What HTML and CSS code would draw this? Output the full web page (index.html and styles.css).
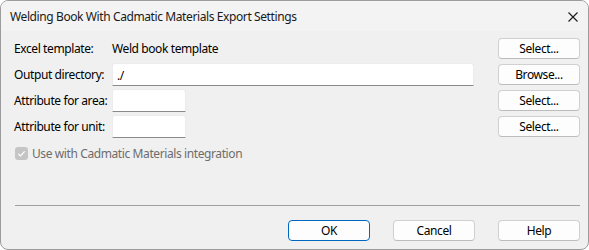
FILE: index.html
```html
<!DOCTYPE html>
<html>
<head>
<meta charset="utf-8">
<link rel="stylesheet" href="styles.css">
</head>
<body>
<div class="window">
  <div class="titlebar">
    <span class="title">Welding Book With Cadmatic Materials Export Settings</span>
    <svg class="close" width="10" height="10" viewBox="0 0 10 10"><path d="M0.5 0.5L9.5 9.5M9.5 0.5L0.5 9.5" stroke="#1a1a1a" stroke-width="1.1" fill="none"/></svg>
  </div>
  <div class="content">
    <div class="form">
      <span class="label">Excel template:</span>
      <span class="value">Weld book template</span>
      <button class="btn">Select...</button>

      <span class="label">Output directory:</span>
      <div class="input wide">./</div>
      <button class="btn">Browse...</button>

      <span class="label">Attribute for area:</span>
      <div class="input short"></div>
      <button class="btn">Select...</button>

      <span class="label">Attribute for unit:</span>
      <div class="input short"></div>
      <button class="btn">Select...</button>
    </div>
    <div class="check-row">
      <span class="checkbox"><svg width="13" height="13" viewBox="0 0 13 13"><path d="M3.3 6.8L5.4 8.9L9.7 4.4" stroke="#ffffff" stroke-width="1.2" fill="none"/></svg></span>
      <span class="check-label">Use with Cadmatic Materials integration</span>
    </div>
    <div class="separator"></div>
    <div class="footer">
      <button class="btn primary">OK</button>
      <button class="btn">Cancel</button>
      <button class="btn">Help</button>
    </div>
  </div>
</div>
</body>
</html>
```
FILE: styles.css
```css
* { box-sizing: border-box; }
html, body { margin: 0; padding: 0; background: #ffffff; }
body {
  font-family: "Noto Sans", "Open Sans", sans-serif;
  font-size: 12px;
  letter-spacing: -0.4px;
  color: #000;
}
.window {
  width: 589px;
  height: 250px;
  border: 1px solid #9c9c9c;
  border-radius: 8px;
  overflow: hidden;
  display: flex;
  flex-direction: column;
  background: #f0f0f0;
}
.titlebar {
  height: 30px;
  background: #f3f3f3;
  display: flex;
  align-items: center;
  justify-content: space-between;
  padding: 0 10px 0 9px;
  flex: none;
}
.title { color: #1a1a1a; }
.close { display: block; margin-top: 1px; }
.content {
  flex: 1;
  display: flex;
  flex-direction: column;
  padding: 7px 8px 8px 13px;
}
.form {
  display: grid;
  grid-template-columns: 99px 1fr 82px;
  grid-template-rows: repeat(4, 21px);
  column-gap: 24px;
  row-gap: 5px;
  align-items: center;
}
.form .label { grid-column: 1; white-space: nowrap; }
.form .value { grid-column: 2; margin-left: -25px; }
.input {
  height: 23px;
  margin: -1px 0 -1px -25px;
  background: #ffffff;
  border: 1px solid #ececec;
  border-bottom: 1px solid #8a8a8a;
  border-radius: 3px 3px 0 0;
  padding: 3px 0 0 4px;
}
.input.short { width: 74px; }
.btn {
  font: inherit;
  letter-spacing: inherit;
  color: #000;
  width: 82px;
  height: 21px;
  padding: 0;
  background: #fdfdfd;
  border: 1px solid #d0d0d0;
  border-bottom-color: #bcbcbc;
  border-radius: 4px;
  line-height: 18px;
}
.btn.primary { border: 1px solid #0067c0; }
.check-row {
  margin-top: 10px;
  height: 13px;
  display: flex;
  align-items: center;
  gap: 4px;
  margin-left: 1px;
}
.checkbox {
  width: 13px;
  height: 13px;
  border-radius: 3px;
  background: #c5c5c5;
  display: block;
}
.checkbox svg { display: block; }
.check-label { color: #6d6d6d; }
.separator {
  margin-top: 45px;
  height: 1px;
  background: #a0a0a0;
  margin-left: 1px;
}
.footer {
  margin-top: 14px;
  display: flex;
  justify-content: flex-end;
  gap: 23px;
}
```
